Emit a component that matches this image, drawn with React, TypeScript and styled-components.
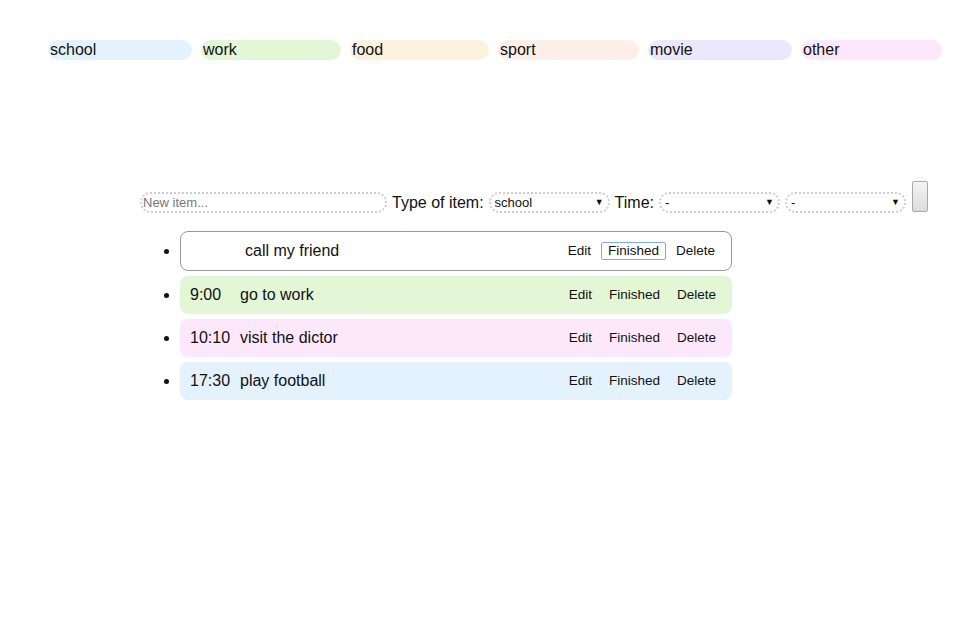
import React from 'react'
import styled, { createGlobalStyle } from 'styled-components'

const GlobalStyle = createGlobalStyle`
  body {
    margin: 8px;
    font-family: 'Liberation Sans', Arial, sans-serif;
    color: #111;
    background: #fff;
  }
`

const tags = [
  { name: 'school', bg: '#e3f2fd', w: 144 },
  { name: 'work', bg: '#e3f6d6', w: 140 },
  { name: 'food', bg: '#fbf3dd', w: 139 },
  { name: 'sport', bg: '#fdefe8', w: 141 },
  { name: 'movie', bg: '#ebe8fd', w: 144 },
  { name: 'other', bg: '#fde8fb', w: 141 },
]

const colorOf = (name: string) => tags.find((t) => t.name === name)?.bg

const Page = styled.div`
  width: 939px;
`

const TagBar = styled.div`
  display: flex;
  gap: 9px;
  padding: 32px 0 0 40px;
`

const Tag = styled.div<{ $bg: string; $w: number }>`
  width: ${({ $w }) => $w}px;
  height: 20px;
  line-height: 20px;
  border-radius: 10px;
  background: ${({ $bg }) => $bg};
  font-size: 16px;
  padding-left: 2px;
  box-sizing: border-box;
`

const Main = styled.div`
  margin: 120px 0 0 132px;
`

const Form = styled.div`
  display: flex;
  align-items: center;
  gap: 5px;
  height: 32px;
`

const TextInput = styled.input`
  width: 247px;
  height: 21px;
  box-sizing: border-box;
  border: 2px dotted #ccc;
  border-radius: 10px;
  padding: 0 1px;
  font-family: 'Liberation Sans', Arial, sans-serif;
  font-size: 13px;
  margin-top: 13px;
  outline: none;
  &::placeholder {
    color: #777;
  }
`

const Label = styled.span`
  font-size: 16px;
  margin-top: 13px;
`

const SelectWrap = styled.div<{ $w: number }>`
  position: relative;
  width: ${({ $w }) => $w}px;
  height: 21px;
  margin-top: 13px;
`

const Select = styled.select`
  appearance: none;
  width: 100%;
  height: 21px;
  box-sizing: border-box;
  border: 2px dotted #ccc;
  border-radius: 10px;
  background: #fff;
  padding: 0 4px;
  font-family: 'Liberation Sans', Arial, sans-serif;
  font-size: 13px;
  color: #111;
  outline: none;
`

const Arrow = styled.span`
  position: absolute;
  right: 6px;
  top: 5px;
  font-size: 9px;
  pointer-events: none;
`

const AddButton = styled.button`
  width: 16px;
  height: 31px;
  padding: 0;
  border: 1px solid #a9a9a9;
  border-radius: 2px;
  background: linear-gradient(#f4f4f4, #dcdcdc);
  margin-left: 1px;
`

const List = styled.ul`
  margin: 19px 0 0;
  padding-left: 40px;
  width: 552px;
  list-style: disc;
`

const Item = styled.li<{ $bg?: string }>`
  height: 38px;
  margin-bottom: 5px;
  border-radius: 8px;
  background: ${({ $bg }) => $bg || '#fff'};
  border: ${({ $bg }) => ($bg ? 'none' : '1px solid #999')};
  box-sizing: border-box;
  font-size: 16px;
  &:first-child {
    height: 40px;
    margin-bottom: 5px;
  }
`

const Row = styled.div`
  display: flex;
  align-items: center;
  height: 100%;
  padding-left: 10px;
`

const Time = styled.span<{ $w: number }>`
  width: ${({ $w }) => $w}px;
`

const Text = styled.span`
  flex: 1;
`

const Actions = styled.div`
  display: flex;
  gap: 3px;
  margin-right: 9px;
`

const Action = styled.button<{ $focus?: boolean }>`
  font-family: 'Liberation Sans', Arial, sans-serif;
  font-size: 13.5px;
  color: #111;
  background: transparent;
  border: 1px solid ${({ $focus }) => ($focus ? '#7fa8ef' : 'transparent')};
  border-radius: 2px;
  padding: 1px 6px;
  line-height: 14px;
`

const items = [
  { time: '', text: 'call my friend', type: '' },
  { time: '9:00', text: 'go to work', type: 'work' },
  { time: '10:10', text: 'visit the dictor', type: 'other' },
  { time: '17:30', text: 'play football', type: 'school' },
]

export default function App() {
  return (
    <Page>
      <GlobalStyle />
      <TagBar>
        {tags.map((t) => (
          <Tag key={t.name} $bg={t.bg} $w={t.w}>
            {t.name}
          </Tag>
        ))}
      </TagBar>
      <Main>
        <Form>
          <TextInput placeholder="New item..." />
          <Label>Type of item:</Label>
          <SelectWrap $w={121}>
            <Select defaultValue="school">
              {tags.map((t) => (
                <option key={t.name}>{t.name}</option>
              ))}
            </Select>
            <Arrow>▼</Arrow>
          </SelectWrap>
          <Label>Time:</Label>
          <SelectWrap $w={121}>
            <Select>
              <option>-</option>
            </Select>
            <Arrow>▼</Arrow>
          </SelectWrap>
          <SelectWrap $w={121}>
            <Select>
              <option>-</option>
            </Select>
            <Arrow>▼</Arrow>
          </SelectWrap>
          <AddButton />
        </Form>
        <List>
          {items.map((it, i) => (
            <Item key={i} $bg={it.type ? colorOf(it.type) : undefined}>
              <Row>
                <Time $w={it.time ? 50 : 54}>{it.time || '\u00a0'}</Time>
                <Text>{it.text}</Text>
                <Actions>
                  <Action>Edit</Action>
                  <Action $focus={i === 0}>Finished</Action>
                  <Action>Delete</Action>
                </Actions>
              </Row>
            </Item>
          ))}
        </List>
      </Main>
    </Page>
  )
}
